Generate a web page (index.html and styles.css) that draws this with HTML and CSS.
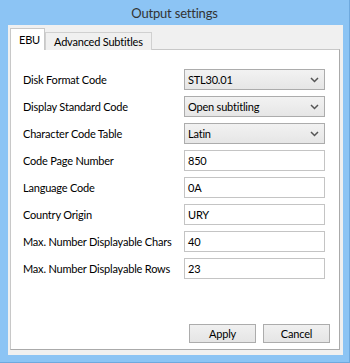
FILE: index.html
```html
<!DOCTYPE html>
<html lang="en">
<head>
    <meta charset="UTF-8">
    <meta name="viewport" content="width=device-width, initial-scale=1.0">
    <title>Output settings</title>
    <link rel="stylesheet" href="styles.css">
</head>
<body>

    <div class="window">
        <div class="titlebar">Output settings</div>
        <div class="client">
            <div class="tabs">
                <div class="tab active">EBU</div>
                <div class="tab">Advanced Subtitles</div>
            </div>
            <div class="panel">
                <div class="form">
                    <label>Disk Format Code</label>
                    <div class="combo"><span>STL30.01</span><svg width="9" height="6" viewBox="0 0 9 6"><polyline points="1,1 4.5,4.5 8,1" fill="none" stroke="#555" stroke-width="1.5"/></svg></div>

                    <label>Display Standard Code</label>
                    <div class="combo"><span>Open subtitling</span><svg width="9" height="6" viewBox="0 0 9 6"><polyline points="1,1 4.5,4.5 8,1" fill="none" stroke="#555" stroke-width="1.5"/></svg></div>

                    <label>Character Code Table</label>
                    <div class="combo"><span>Latin</span><svg width="9" height="6" viewBox="0 0 9 6"><polyline points="1,1 4.5,4.5 8,1" fill="none" stroke="#555" stroke-width="1.5"/></svg></div>

                    <label>Code Page Number</label>
                    <div class="text-box">850</div>

                    <label>Language Code</label>
                    <div class="text-box">0A</div>

                    <label>Country Origin</label>
                    <div class="text-box">URY</div>

                    <label>Max. Number Displayable Chars</label>
                    <div class="text-box">40</div>

                    <label>Max. Number Displayable Rows</label>
                    <div class="text-box">23</div>
                </div>

                <div class="buttons">
                    <button>Apply</button>
                    <button>Cancel</button>
                </div>
            </div>
        </div>
    </div>

</body>
</html>
```

FILE: styles.css
```css
body {
    margin: 0;
    font-family: Lato, "Noto Sans", Arial, sans-serif;
    font-size: 11px;
    letter-spacing: -0.2px;
    color: #000;
}
.window {
    width: 350px;
    height: 363px;
    box-sizing: border-box;
    background-color: #8cc4f4;
    border-right: 1px solid #6ea9de;
    border-bottom: 1px solid #6ea9de;
    display: flex;
    flex-direction: column;
}
.titlebar {
    height: 25px;
    line-height: 26px;
    text-align: center;
    font-size: 13px;
    color: #333;
}
.client {
    flex: 1;
    margin: 0 6px 7px 8px;
    background-color: #f0f0f0;
    padding: 4px 3px 5px 2px;
    display: flex;
    flex-direction: column;
}
.tabs {
    display: flex;
    align-items: flex-end;
    height: 21px;
    margin-bottom: -1px;
    position: relative;
    z-index: 1;
}
.tab {
    height: 17px;
    line-height: 17px;
    padding: 0 8px;
    border: 1px solid #d0d0d0;
    border-bottom: none;
    background-color: #f0f0f0;
    white-space: nowrap;
}
.tab.active {
    height: 21px;
    line-height: 21px;
    background-color: #fff;
    border-color: #c8c8c8;
    width: 17px;
}
.panel {
    flex: 1;
    background-color: #fff;
    border: 1px solid #c8c8c8;
    border-right-color: #aaa;
    border-bottom-color: #aaa;
    display: flex;
    flex-direction: column;
}
.form {
    display: grid;
    grid-template-columns: 161px 141px;
    row-gap: 6px;
    align-items: center;
    padding: 19px 0 0 12px;
}
.form label {
    white-space: nowrap;
}
.combo, .text-box {
    height: 21px;
    box-sizing: border-box;
    display: flex;
    align-items: center;
    padding: 0 5px 0 3px;
}
.combo {
    justify-content: space-between;
    border: 1px solid #acacac;
    background: linear-gradient(#f2f2f2, #e6e6e6);
}
.text-box {
    border: 1px solid #c4c4c4;
    background-color: #fff;
}
.buttons {
    margin-top: auto;
    display: flex;
    justify-content: flex-end;
    gap: 7px;
    padding: 0 9px 6px 0;
}
button {
    width: 67px;
    height: 19px;
    padding: 0;
    font-family: inherit;
    font-size: 11px;
    letter-spacing: -0.2px;
    color: #000;
    border: 1px solid #acacac;
    background: linear-gradient(#f0f0f0, #e5e5e5);
}
```
